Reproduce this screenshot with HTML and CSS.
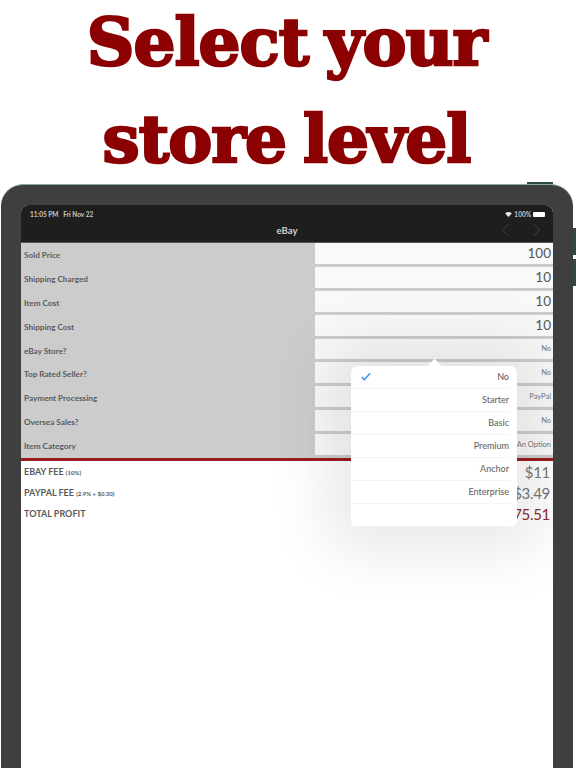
FILE: index.html
```html
<!DOCTYPE html>
<html lang="en">
<head>
<meta charset="utf-8">
<title>Select your store level</title>
<link rel="stylesheet" href="styles.css">
</head>
<body>
<h1 class="headline">Select your<br>store level</h1>
<div class="device">
  <span class="btn-top"></span>
  <span class="btn-side one"></span>
  <span class="btn-side two"></span>
  <div class="screen">
    <div class="status">
      <span>11:05 PM&nbsp;&nbsp;&nbsp;Fri Nov 22</span>
      <span class="status-right">
        <svg class="wifi" viewBox="0 0 12 9"><path d="M6 9 0 2.6C3.6-.8 8.400-.8 12 2.600z" fill="#e8e8e8"/></svg>
        100%
        <i class="battery"></i>
      </span>
    </div>
    <div class="nav">
      <span>eBay</span>
      <div class="arrows">
        <svg viewBox="0 0 10 16"><path d="M8.500 1 1.500 8l7 7" fill="none" stroke="#444" stroke-width="1.100"/></svg>
        <svg viewBox="0 0 10 16"><path d="M1.500 1l7 7-7 7" fill="none" stroke="#444" stroke-width="1.100"/></svg>
      </div>
    </div>
    <div class="form">
      <div class="row"><label>Sold Price</label><div class="field big">100</div></div>
      <div class="row"><label>Shipping Charged</label><div class="field big">10</div></div>
      <div class="row"><label>Item Cost</label><div class="field big">10</div></div>
      <div class="row"><label>Shipping Cost</label><div class="field big">10</div></div>
      <div class="row"><label>eBay Store?</label><div class="field">No</div></div>
      <div class="row"><label>Top Rated Seller?</label><div class="field">No</div></div>
      <div class="row"><label>Payment Processing</label><div class="field">PayPal</div></div>
      <div class="row"><label>Oversea Sales?</label><div class="field">No</div></div>
      <div class="row"><label>Item Category</label><div class="field">An Option</div></div>
    </div>
    <div class="results">
      <div class="result"><span>EBAY FEE <small>(10%)</small></span><b>$11</b></div>
      <div class="result"><span>PAYPAL FEE <small>(2.9% + $0.30)</small></span><b>$3.49</b></div>
      <div class="result total"><span>TOTAL PROFIT</span><b>$75.51</b></div>
    </div>
    <div class="popover">
      <i class="tip"></i>
      <div class="option"><svg class="check" viewBox="0 0 12 10"><path d="M1 5.500 4 9l7-8" fill="none" stroke="#3d94f6" stroke-width="1.800"/></svg><span>No</span></div>
      <div class="option"><span>Starter</span></div>
      <div class="option"><span>Basic</span></div>
      <div class="option"><span>Premium</span></div>
      <div class="option"><span>Anchor</span></div>
      <div class="option"><span>Enterprise</span></div>
      <div class="option"></div>
    </div>
  </div>
</div>
</body>
</html>
```

FILE: styles.css
```css
* { box-sizing: border-box; }
html, body { margin: 0; height: 768px; overflow: hidden; background: #fff; }
body { display: flex; flex-direction: column; font-family: Lato, "Open Sans", sans-serif; }
.headline {
  margin: -6px 0 0; padding-right: 3px; height: 190px; width: 100%; flex: none;
  font-family: "DejaVu Serif", serif; font-weight: 700; font-size: 66px; line-height: 97px;
  color: #8b0000; text-align: center; -webkit-text-stroke: 2.500px #8b0000; letter-spacing: -1px; word-spacing: -5px;
}
.device {
  position: relative; width: 572px; height: 584px; flex: none; margin-left: 1px;
  background: #3f3f3f; border-radius: 22px 22px 0 0; padding: 20px 20px 0 20px;
  border-top: 1px solid #8ea89c;
}
.btn-top { position: absolute; top: -3px; left: 526px; width: 26px; height: 2px; background: #2f4a3e; }
.btn-side { position: absolute; left: 572px; width: 3px; height: 27px; background: #2f4a3e; }
.btn-side.one { top: 43px; }
.btn-side.two { top: 74px; }
.screen { position: relative; height: 100%; background: #fff; border-radius: 8px 8px 0 0; overflow: hidden; }
.status { height: 18px; background: #1e1e1e; color: #c8c8c8; font-size: 6.500px; display: flex; justify-content: space-between; align-items: center; padding: 0 8px 0 9px; font-weight: 700; }
.status-right { display: flex; align-items: center; gap: 2px; }
.wifi { width: 7px; height: 5px; }
.battery { display: block; width: 12px; height: 5px; background: #fff; border-radius: 1px; }
.nav { background: #1e1e1e; color: #d0d0d0; font-size: 9.500px; font-weight: 700; display: flex; align-items: center; justify-content: center; position: relative; padding-bottom: 5px; height: 20px; border-bottom: 1px solid #555; }
.arrows { position: absolute; right: 12px; top: 0; display: flex; gap: 22px; }
.arrows svg { width: 9px; height: 14px; display: block; }
.form { background: #ccc; height: 215px; }
.row { height: 23.890px; display: flex; justify-content: space-between; padding-bottom: 3px; }
.row label { font-size: 8.200px; font-weight: 700; color: #5a5a5a; padding: 7px 0 0 3px; }
.field { width: 238px; background: #f9f9f9; color: #777; font-size: 7.500px; font-weight: 400; display: flex; justify-content: flex-end; align-items: center; padding-right: 2px; }
.field.big { font-size: 13.500px; color: #555; }
.results { border-top: 3px solid #9b1c1c; }
.result { height: 21px; display: flex; justify-content: space-between; align-items: center; padding: 0 3px; color: #5a5a5a; font-size: 9px; font-weight: 700; }
.result small { font-size: 6px; font-weight: 700; }
.result b { font-weight: 400; font-size: 15px; letter-spacing: -.3px; color: #777; }
.result.total b { color: #8f2a2a; }
.popover {
  position: absolute; left: 330px; top: 161px; width: 166px; background: #fff; border-radius: 7px;
  padding: 0 8px 0 0; box-shadow: 0 0 60px 25px rgba(0,0,0,.09);
}
.tip { position: absolute; top: -5px; left: 78px; width: 11px; height: 11px; background: #fff; transform: rotate(45deg); }
.option { position: relative; height: 23px; padding-bottom: 2px; display: flex; justify-content: flex-end; align-items: center; border-bottom: 1px solid #f4f4f4; color: #666; font-size: 9px; font-weight: 500; }
.check { position: absolute; left: 10px; top: 6px; width: 10px; height: 9px; }
```
